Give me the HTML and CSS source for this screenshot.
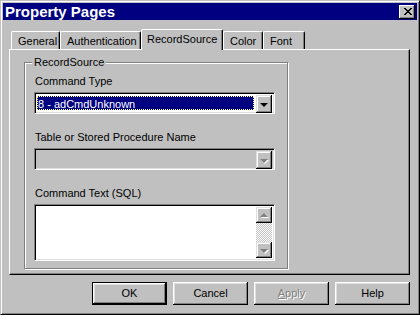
FILE: index.html
```html
<!DOCTYPE html>
<html lang="en">
<head>
	<meta charset="UTF-8">
	<title>Property Pages</title>
	<link rel="stylesheet" href="styles.css">
</head>
<body>
	<div class="window">

		<div class="titlebar">
			<span class="title">Property Pages</span>
			<div class="close">
				<svg width="8" height="7" viewBox="0 0 8 7" shape-rendering="crispEdges">
					<path d="M0 0h2v1H0zM6 0h2v1H6zM1 1h2v1H1zM5 1h2v1H5zM2 2h4v1H2zM3 3h2v1H3zM2 4h4v1H2zM1 5h2v1H1zM5 5h2v1H5zM0 6h2v1H0zM6 6h2v1H6z" fill="#000"/>
				</svg>
			</div>
		</div>

		<div class="tabs">
			<div class="tab t-general">General</div>
			<div class="tab t-auth">Authentication</div>
			<div class="tab t-source active">RecordSource</div>
			<div class="tab t-color">Color</div>
			<div class="tab t-font">Font</div>
		</div>

		<div class="panel">
			<div class="group">
				<span class="legend">RecordSource</span>

				<div class="label">Command Type</div>
				<div class="combo">
					<div class="sel">8 - adCmdUnknown</div>
					<div class="drop"><span class="arrow"></span></div>
				</div>

				<div class="label">Table or Stored Procedure Name</div>
				<div class="combo disabled">
					<div class="sel"></div>
					<div class="drop"><span class="arrow"></span></div>
				</div>

				<div class="label">Command Text (SQL)</div>
				<div class="memo">
					<div class="text"></div>
					<div class="scroll">
						<div class="sbtn"><span class="arrow up"></span></div>
						<div class="track"></div>
						<div class="sbtn"><span class="arrow"></span></div>
					</div>
				</div>
			</div>
		</div>

		<div class="buttons">
			<div class="btn default">OK</div>
			<div class="btn">Cancel</div>
			<div class="btn off"><u>A</u>pply</div>
			<div class="btn">Help</div>
		</div>

	</div>
</body>
</html>
```

FILE: styles.css
```css
*{margin:0;padding:0;box-sizing:border-box;}
body{background:#c0c0c0;font:11px/13px "Liberation Sans", Arial, sans-serif;color:#000;}

.window{width:420px;height:315px;border:1px solid;border-color:#c0c0c0 #000 #000 #c0c0c0;box-shadow:inset 1px 1px #fff, inset -1px -1px #808080;padding:2px;}

.titlebar{height:17px;background:#000080;color:#fff;display:flex;align-items:center;justify-content:space-between;padding:0 2px 0 2px;}
.title{font-weight:bold;font-size:15px;line-height:17px;}
.close{width:16px;height:14px;background:#c0c0c0;display:flex;align-items:center;justify-content:center;padding-left:1px;
	box-shadow:inset -1px -1px #000, inset 1px 1px #fff, inset -2px -2px #808080;}
.close svg{display:block;}

/* tab strip */
.tabs{display:flex;align-items:flex-end;height:20px;margin:9px 0 0 8px;}
.tab{height:18px;padding:3px 0 0 6px;border:1px solid;border-bottom:none;border-color:#fff #000 #fff #fff;border-radius:2px 2px 0 0;box-shadow:inset -1px 0 #808080;white-space:nowrap;}
.tab.active{height:21px;margin-bottom:-1px;position:relative;z-index:1;background:#c0c0c0;padding-top:3px;}
.t-general{width:49px;}
.t-auth{width:81px;}
.t-source{width:82px;padding-left:5px;}
.t-color{width:40px;}
.t-font{width:42px;}

.panel{width:401px;height:226px;margin-left:6px;border:1px solid;border-color:#fff #000 #000 #fff;box-shadow:inset -1px -1px #808080;padding:12px 0 0 14px;}

/* group box */
.group{position:relative;width:264px;height:207px;border:1px solid #808080;box-shadow:inset 1px 1px #fff, 1px 1px #fff;padding:12px 0 0 9px;}
.legend{position:absolute;top:-7px;left:7px;background:#c0c0c0;padding:0 2px 0 2px;}
.label{padding-left:1px;margin-bottom:4px;}

.combo{width:241px;height:22px;display:flex;padding:2px;margin-bottom:17px;background:#fff;
	border:1px solid;border-color:#808080 #fff #fff #808080;box-shadow:inset 1px 1px #000, inset -1px -1px #dfdfdf;}
.combo .sel{flex:1;margin:1px 2px 1px 0;background:#000080;color:#fff;outline:1px dotted #ffff80;outline-offset:-1px;padding-left:1px;line-height:16px;}
.combo.disabled{background:#c0c0c0;}
.combo.disabled .sel{background:none;outline:none;}

.drop,.sbtn{width:16px;height:18px;background:#c0c0c0;display:flex;align-items:center;justify-content:center;
	box-shadow:inset -1px -1px #000, inset 1px 1px #dfdfdf, inset -2px -2px #808080, inset 2px 2px #fff;}
.arrow{width:0;height:0;border-left:4px solid transparent;border-right:4px solid transparent;border-top:4px solid #000;margin:1px 0 0 -1px;}
.arrow.up{border-top:none;border-bottom:4px solid #808080;margin:-1px 0 0 -1px;}
.disabled .arrow,.sbtn .arrow{border-top-color:#808080;filter:drop-shadow(1px 1px 0 #fff);}

.memo{width:241px;height:57px;display:flex;padding:2px;background:#fff;
	border:1px solid;border-color:#808080 #fff #fff #808080;box-shadow:inset 1px 1px #000, inset -1px -1px #dfdfdf;}
.memo .text{flex:1;}
.scroll{width:16px;display:flex;flex-direction:column;}
.sbtn{height:16px;}
.track{flex:1;background:repeating-conic-gradient(#fff 0 25%, #c0c0c0 0 50%) 0 0/2px 2px;}

/* dialog buttons */
.buttons{width:401px;margin:7px 0 0 6px;display:flex;justify-content:flex-end;gap:6px;}
.btn{width:75px;height:23px;display:flex;align-items:center;justify-content:center;
	box-shadow:inset -1px -1px #000, inset 1px 1px #fff, inset -2px -2px #808080, inset 2px 2px #dfdfdf;}
.btn.default{border:1px solid #000;box-shadow:inset -1px -1px #000, inset 1px 1px #fff, inset -2px -2px #808080, inset 2px 2px #dfdfdf;}
.btn.off{color:#808080;text-shadow:1px 1px 0 #fff;}
```
